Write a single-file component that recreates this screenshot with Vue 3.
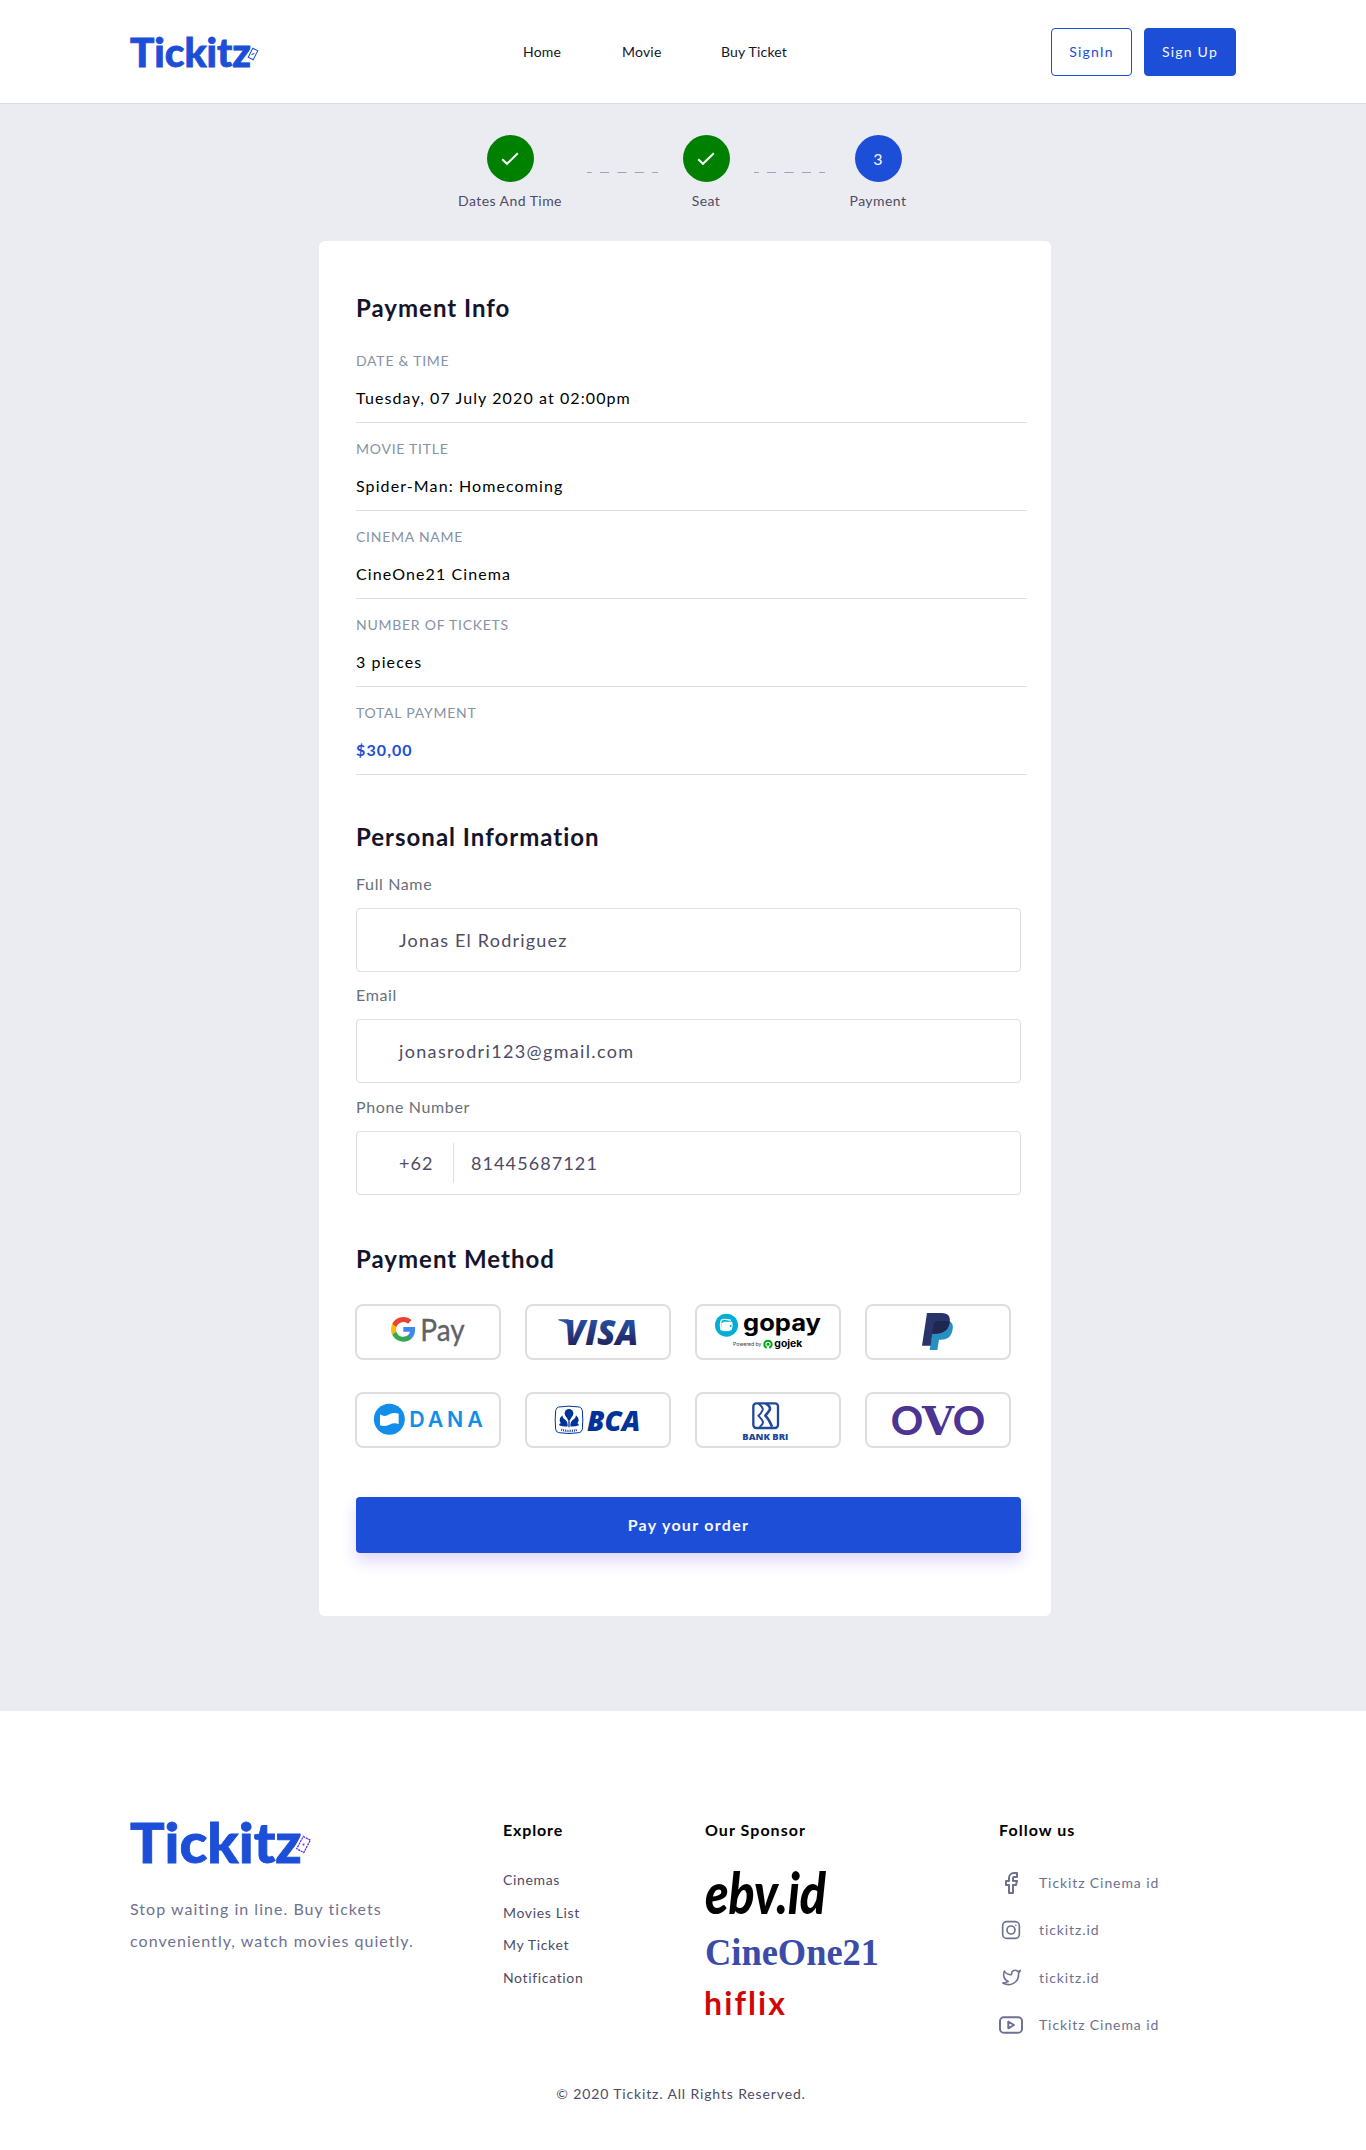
<script setup>
const nav = [
  { text: 'Home', cls: 'n1' },
  { text: 'Movie', cls: 'n2' },
  { text: 'Buy Ticket', cls: 'n3' },
]

const info = [
  { label: 'DATE & TIME', value: 'Tuesday, 07 July 2020 at 02:00pm' },
  { label: 'MOVIE TITLE', value: 'Spider-Man: Homecoming' },
  { label: 'CINEMA NAME', value: 'CineOne21 Cinema' },
  { label: 'NUMBER OF TICKETS', value: '3 pieces' },
  { label: 'TOTAL PAYMENT', value: '$30,00', total: true },
]

const explore = ['Cinemas', 'Movies List', 'My Ticket', 'Notification']
</script>

<template>
  <div class="page">
    <header class="header">
      <svg class="logo" width="130" height="34" viewBox="0 0 130 34">
        <text class="brand" x="0" y="31.500" font-size="39.500" textLength="121" lengthAdjust="spacingAndGlyphs">Tickitz</text>
        <g transform="translate(123 19) rotate(27)">
          <rect x="-4.5" y="-7.5" width="9" height="15" fill="#fff" />
          <rect x="-2.8" y="-5" width="5.6" height="10" fill="none" stroke="#1d4ed8" stroke-width="1" />
          <path d="M-1 1L1 -1" stroke="#1d4ed8" />
        </g>
      </svg>
      <nav class="nav">
        <a v-for="n in nav" :key="n.text" :class="n.cls">{{ n.text }}</a>
      </nav>
      <div class="auth">
        <button class="btn outline">SignIn</button>
        <button class="btn solid">Sign Up</button>
      </div>
    </header>

    <main class="main">
      <div class="steps">
        <div class="step s1">
          <span class="dot done">
            <svg width="18" height="14" viewBox="0 0 18 14"><path d="M1.2 7.2L6 11.8L16.8 1.2" fill="none" stroke="#fff" stroke-width="2" /></svg>
          </span>
          <span class="caption">Dates And Time</span>
        </div>
        <svg class="dash" width="71" height="1" viewBox="0 0 71 1"><path d="M0 .5H71" stroke="#a0a3bd" stroke-dasharray="9.2 8.2" stroke-dashoffset="4.4" /></svg>
        <div class="step s2">
          <span class="dot done">
            <svg width="18" height="14" viewBox="0 0 18 14"><path d="M1.2 7.2L6 11.8L16.8 1.2" fill="none" stroke="#fff" stroke-width="2" /></svg>
          </span>
          <span class="caption">Seat</span>
        </div>
        <svg class="dash" width="71" height="1" viewBox="0 0 71 1"><path d="M0 .5H71" stroke="#a0a3bd" stroke-dasharray="9.2 8.2" stroke-dashoffset="4.4" /></svg>
        <div class="step s3">
          <span class="dot current">3</span>
          <span class="caption">Payment</span>
        </div>
      </div>

      <section class="card">
        <h2>Payment Info</h2>
        <div class="rows">
          <div v-for="row in info" :key="row.label" class="row">
            <div class="row-label">{{ row.label }}</div>
            <div class="row-value" :class="{ total: row.total }">{{ row.value }}</div>
          </div>
        </div>

        <h2 class="h-personal">Personal Information</h2>
        <div class="fields">
          <div class="field">
            <label>Full Name</label>
            <div class="input"><span>Jonas El Rodriguez</span></div>
          </div>
          <div class="field">
            <label>Email</label>
            <div class="input"><span class="mail">jonasrodri123@gmail.com</span></div>
          </div>
          <div class="field">
            <label>Phone Number</label>
            <div class="input"><span class="prefix">+62</span><span class="phone">81445687121</span></div>
          </div>
        </div>

        <h2 class="h-method">Payment Method</h2>
        <div class="methods">
          <div class="tile">
            <svg viewBox="45 42 438 168">
              <g transform="translate(149.6 77.6) scale(3.36)">
                <path fill="#4285f4" d="M22.56 12.25c0-.78-.07-1.53-.2-2.25H12v4.26h5.92c-.26 1.37-1.04 2.53-2.21 3.31v2.77h3.57c2.08-1.92 3.28-4.74 3.28-8.09z" />
                <path fill="#34a853" d="M12 23c2.97 0 5.46-.98 7.28-2.66l-3.57-2.77c-.98.66-2.23 1.06-3.71 1.06-2.86 0-5.29-1.93-6.16-4.53H2.18v2.84C3.99 20.53 7.7 23 12 23z" />
                <path fill="#fbbc05" d="M5.84 14.09c-.22-.66-.35-1.36-.35-2.09s.13-1.43.35-2.09V7.07H2.18C1.43 8.55 1 10.22 1 12s.43 3.45 1.18 4.93l2.85-2.22.81-.62z" />
                <path fill="#ea4335" d="M12 5.38c1.62 0 3.06.56 4.21 1.64l3.15-3.15C17.45 2.09 14.97 1 12 1 7.7 1 3.99 3.47 2.18 7.07l3.66 2.84c.87-2.6 3.3-4.53 6.16-4.53z" />
              </g>
              <text class="lato" x="241" y="153" font-size="90" fill="#5f6368" stroke="#5f6368" stroke-width="1" textLength="133" lengthAdjust="spacingAndGlyphs">Pay</text>
            </svg>
          </div>
          <div class="tile">
            <svg viewBox="555 42 438 168">
              <defs>
                <linearGradient id="visa" x1="0" y1="0" x2="0" y2="1">
                  <stop offset=".25" stop-color="#2850a6" />
                  <stop offset=".8" stop-color="#22245f" />
                </linearGradient>
              </defs>
              <path d="M655 88H684Q690 88 692 96L697 125Q686 98 655 91Z" fill="#2850a6" />
              <text class="open" x="673" y="164" font-size="106" font-weight="800" font-style="italic" fill="url(#visa)" textLength="222" lengthAdjust="spacingAndGlyphs">VISA</text>
            </svg>
          </div>
          <div class="tile">
            <svg viewBox="45 42 438 168">
              <circle cx="139.500" cy="105.500" r="34.500" fill="#00aed6" />
              <path d="M153 91Q125 85 123 93Q119 106 123 119Q137 124 153 119Q158 106 155 97H130" fill="none" stroke="#fff" stroke-width="4" stroke-linejoin="round" />
              <path d="M124 98H154Q157 108 153 119Q138 123 124 119Z" fill="#fff" />
              <circle cx="152" cy="108" r="3" fill="#00aed6" />
              <text class="inter" x="189" y="122" font-size="68" font-weight="700" textLength="234" lengthAdjust="spacingAndGlyphs">gopay</text>
              <text class="inter" x="159" y="167" font-size="16" fill="#333" textLength="85" lengthAdjust="spacingAndGlyphs">Powered by</text>
              <circle cx="264" cy="163" r="11" fill="none" stroke="#00aa13" stroke-width="6" stroke-dasharray="61 8" stroke-dashoffset="48" />
              <circle cx="264" cy="163" r="4.500" fill="#00aa13" />
              <text class="inter" x="283" y="170" font-size="28" font-weight="700" textLength="84" lengthAdjust="spacingAndGlyphs">gojek</text>
            </svg>
          </div>
          <div class="tile">
            <svg viewBox="555 42 438 168">
              <path d="M763 93H806C818 97 821 108 817 122C813 141 800 149 784 149H777L772 180H749L752 160Z" fill="#2790c3" />
              <path d="M741 69H785C805 69 812 80 809 97C805 122 788 131 766 131H757L752 167H726Z" fill="#28346a" />
              <path d="M771 93H809C808 118 793 131 766 131H757L761 101Q763 93 771 93Z" fill="#1f264f" />
            </svg>
          </div>
          <div class="tile">
            <svg viewBox="45 306 438 168">
              <circle cx="148" cy="388" r="46.500" fill="#118eea" />
              <path d="M120 373Q134 383 148 373Q162 366 176 371V402Q162 397 148 404Q134 411 120 406Z" fill="#fff" />
              <text class="inter" x="208" y="412" font-size="64" font-weight="600" fill="#118eea" textLength="220">DANA</text>
            </svg>
          </div>
          <div class="tile">
            <svg viewBox="555 306 438 168">
              <g fill="#003399">
                <path d="M656 351Q687 346 718 351Q726 353 727 362Q730 390 727 418Q725 426 718 428Q687 433 656 428Q648 426 647 418Q644 390 647 362Q648 353 656 351Z" fill="none" stroke="#003399" stroke-width="3" />
                <circle cx="687" cy="370" r="13" />
                <path d="M676 376H698L690 390H684Z" />
                <path d="M683 409Q662 405 659 393Q659 382 667 376Q669 387 676 389Q684 396 683 409Z" />
                <path d="M691 409Q712 405 716 393Q716 382 708 376Q706 387 699 389Q690 396 691 409Z" />
                <path d="M683 409Q672 411 657 406Q658 399 665 399Z M691 409Q702 411 717 406Q716 399 709 399Z" />
                <path d="M685 384H689V412H685Z" />
                <path d="M664 419Q687 427 711 419" fill="none" stroke="#003399" stroke-width="7" stroke-dasharray="2.500 3" />
                <text class="open" x="741" y="422" font-size="85" font-weight="800" font-style="italic" textLength="160" lengthAdjust="spacingAndGlyphs">BCA</text>
              </g>
            </svg>
          </div>
          <div class="tile">
            <svg viewBox="45 306 438 168">
              <g fill="none" stroke="#20489a" stroke-width="7" stroke-linejoin="round">
                <rect x="220" y="340" width="74" height="74" rx="9" />
                <path d="M236 341Q250 352 248 360Q244 370 235 377Q246 388 249 396Q250 402 239 411" stroke-width="6" />
                <path d="M257 341Q271 348 270 358Q264 368 256 377Q267 388 276 410" stroke-width="8" />
              </g>
              <text class="open" x="187" y="450" font-size="27" font-weight="800" fill="#20489a" textLength="138" lengthAdjust="spacingAndGlyphs">BANK BRI</text>
            </svg>
          </div>
          <div class="tile">
            <svg viewBox="555 306 438 168">
              <g fill="#4c3494">
                <text class="inter" x="630" y="434" font-size="120" font-weight="600" textLength="102" lengthAdjust="spacingAndGlyphs">O</text>
                <text class="dserif" x="726" y="434" font-size="119" font-weight="700" textLength="96" lengthAdjust="spacingAndGlyphs">V</text>
                <text class="inter" x="816" y="434" font-size="120" font-weight="600" textLength="102" lengthAdjust="spacingAndGlyphs">O</text>
              </g>
            </svg>
          </div>
        </div>

        <button class="pay">Pay your order</button>
      </section>
    </main>

    <footer class="footer">
      <div class="cols">
        <div class="about">
          <svg class="logo" width="184" height="48" viewBox="0 0 184 48">
            <text class="brand" x="0" y="44.500" font-size="55.500" textLength="172" lengthAdjust="spacingAndGlyphs">Tickitz</text>
            <g transform="translate(173.500 26.500) rotate(28)">
              <rect x="-6.500" y="-9.500" width="13" height="19" fill="#fff" />
              <rect x="-4" y="-7" width="8" height="14" fill="none" stroke="#5f2eea" stroke-width="1.300" stroke-dasharray="2.200 .7" />
              <circle r="1" fill="#5f2eea" />
            </g>
          </svg>
          <p>Stop waiting in line. Buy tickets<br />conveniently, watch movies quietly.</p>
        </div>
        <div class="explore">
          <h3 class="tight">Explore</h3>
          <a v-for="item in explore" :key="item">{{ item }}</a>
        </div>
        <div class="sponsor">
          <h3>Our Sponsor</h3>
          <svg width="180" height="156" viewBox="0 0 180 156">
            <text class="lato" x="0" y="46" font-size="58" font-weight="900" font-style="italic" textLength="121" lengthAdjust="spacingAndGlyphs">ebv.id</text>
            <text class="lserif" x="0" y="96.500" font-size="37" font-weight="700" fill="#3a4ca8" textLength="174" lengthAdjust="spacingAndGlyphs">CineOne21</text>
            <text class="lato plain" x="-1" y="147" font-size="32" font-weight="700" fill="#d00707" textLength="81">hiflix</text>
          </svg>
        </div>
        <div class="follow">
          <h3>Follow us</h3>
          <ul>
            <li>
              <span class="ico"><svg width="24" height="24" viewBox="0 0 24 24"><path d="M18 2h-3a5 5 0 0 0-5 5v3H7v4h3v8h4v-8h3l1-4h-4V7a1 1 0 0 1 1-1h3z" /></svg></span>
              <span>Tickitz Cinema id</span>
            </li>
            <li>
              <span class="ico"><svg width="20" height="20" viewBox="0 0 24 24"><rect x="2" y="2" width="20" height="20" rx="5" /><circle cx="12" cy="12" r="4.800" /><path d="M17.800 6.300h.01" /></svg></span>
              <span>tickitz.id</span>
            </li>
            <li>
              <span class="ico"><svg width="19" height="19" viewBox="0 0 24 24"><path d="M23 3a10.900 10.900 0 0 1-3.140 1.530 4.480 4.480 0 0 0-7.860 3v1A10.660 10.660 0 0 1 3 4s-4 9 5 13a11.640 11.640 0 0 1-7 2c9 5 20 0 20-11.500a4.500 4.500 0 0 0-.08-.83A7.720 7.720 0 0 0 23 3z" /></svg></span>
              <span>tickitz.id</span>
            </li>
            <li>
              <span class="ico"><svg width="24" height="18" viewBox="0 0 24 18"><rect x="1" y="1.300" width="22" height="15.400" rx="3.800" /><path d="M9.300 5.700V12.300L15 9Z" /></svg></span>
              <span>Tickitz Cinema id</span>
            </li>
          </ul>
        </div>
      </div>
      <p class="copy">© 2020 Tickitz. All Rights Reserved.</p>
    </footer>
  </div>
</template>

<style>
body {
  margin: 0;
  background: #fff;
}
</style>

<style scoped>
.page {
  width: 1366px;
  height: 2150px;
  overflow: hidden;
  background: #fff;
  font-family: Lato, "Open Sans", sans-serif;
  color: #14142b;
}
h2, h3, p, ul {
  margin: 0;
  padding: 0;
}
button {
  font-family: inherit;
  box-sizing: border-box;
  padding: 0;
}
.logo {
  display: block;
  overflow: visible;
}
.brand {
  font-family: Lato, sans-serif;
  font-weight: 900;
  fill: #1d4ed8;
  stroke: #1d4ed8;
  stroke-width: .8;
}
.lato { font-family: Lato, sans-serif; }
.open { font-family: "Open Sans", sans-serif; }
.inter { font-family: Inter, sans-serif; }
.dserif { font-family: "DejaVu Serif", serif; }
.lserif { font-family: "Liberation Serif", serif; }
.plain { font-variant-ligatures: none; }

.header {
  box-sizing: border-box;
  height: 104px;
  padding: 0 130px;
  display: flex;
  align-items: center;
  border-bottom: 1px solid #dedede;
}
.nav {
  display: flex;
  margin-left: 263px;
  font-size: 14px;
  line-height: 20px;
  letter-spacing: .2px;
}
.nav a { white-space: nowrap; }
.n1 { width: 99px; }
.n2 { width: 99px; }
.auth {
  display: flex;
  gap: 12px;
  margin-left: auto;
}
.btn {
  height: 48px;
  border-radius: 4px;
  border: 1px solid #1d4ed8;
  font-size: 14px;
  letter-spacing: 1.2px;
}
.outline {
  width: 81px;
  background: #fff;
  color: #1d4ed8;
}
.solid {
  width: 92px;
  background: #1d4ed8;
  color: #f7f7fc;
}

.main {
  box-sizing: border-box;
  height: 1607px;
  padding-top: 31px;
  background: #ebecf1;
}
.steps {
  display: flex;
  margin-left: 457px;
  height: 106px;
}
.step {
  display: flex;
  flex-direction: column;
  align-items: center;
}
.s1 { width: 106px; margin-right: 24px; }
.s2 { width: 50px; margin: 0 23px; }
.s3 { width: 60px; margin-left: 23px; }
.dot {
  display: flex;
  align-items: center;
  justify-content: center;
  width: 47px;
  height: 47px;
  border-radius: 50%;
  font-size: 16px;
  color: #f7f7fc;
}
.done { background: #008000; }
.current { background: #1d4ed8; }
.caption {
  margin-top: 9px;
  font-size: 14px;
  line-height: 20px;
  color: #4e4b66;
  letter-spacing: .45px;
  white-space: nowrap;
}
.dash { margin-top: 37px; }

.card {
  box-sizing: border-box;
  width: 732px;
  height: 1375px;
  margin-left: 319px;
  padding: 52px 30px 0 37px;
  border-radius: 6px;
  background: #fff;
}
h2 {
  font-size: 24px;
  line-height: 30px;
  font-weight: 700;
  letter-spacing: 1px;
}
.rows { margin-top: 12px; width: 671px; }
.row {
  box-sizing: border-box;
  height: 88px;
  padding-top: 16px;
  border-bottom: 1px solid #dedede;
}
.row-label {
  font-size: 14px;
  line-height: 20px;
  letter-spacing: .75px;
  color: #8692a6;
}
.row-value {
  margin-top: 15px;
  font-size: 16px;
  line-height: 24px;
  letter-spacing: 1.1px;
  color: #000;
}
.total {
  font-weight: 700;
  color: #1d4ed8;
}
.h-personal { margin-top: 47px; }
.fields {
  display: flex;
  flex-direction: column;
  gap: 11.4px;
  width: 665px;
  margin-top: 20px;
}
.field label {
  display: block;
  font-size: 16px;
  line-height: 24px;
  letter-spacing: .63px;
  color: #696f79;
}
.input {
  box-sizing: border-box;
  display: flex;
  align-items: center;
  height: 64px;
  margin-top: 12px;
  padding-left: 42px;
  border: 1px solid #dedede;
  border-radius: 4px;
  font-size: 18px;
  letter-spacing: 1.2px;
  color: #4e4b66;
}
.mail { letter-spacing: 1.35px; }
.prefix {
  box-sizing: border-box;
  width: 55px;
  height: 40px;
  line-height: 40px;
  letter-spacing: 1px;
  border-right: 1px solid #dedede;
}
.phone {
  margin-left: 17px;
  letter-spacing: 1.1px;
}
.h-method { margin-top: 49px; }
.methods {
  display: grid;
  grid-template-columns: repeat(4, 146px);
  gap: 32px 24px;
  margin: 30px 0 0 -1px;
}
.tile {
  box-sizing: border-box;
  height: 56px;
  border: 2px solid #dedede;
  border-radius: 8px;
}
.tile svg {
  display: block;
  width: 146px;
  height: 56px;
  margin: -2px;
}
.pay {
  display: block;
  width: 665px;
  height: 56px;
  margin-top: 49px;
  border: 0;
  border-radius: 4px;
  background: #1d4ed8;
  color: #f7f7fc;
  font-size: 16px;
  font-weight: 700;
  letter-spacing: 1.3px;
  box-shadow: 0 8px 16px rgba(95, 46, 234, .2);
}

.footer { padding: 107px 130px 0; }
.cols { display: flex; height: 266px; }
.about { width: 373px; }
.about p {
  margin-top: 27px;
  font-size: 16px;
  line-height: 32px;
  letter-spacing: 1.03px;
  color: #6e7191;
}
h3 {
  font-size: 16px;
  line-height: 24px;
  font-weight: 700;
  letter-spacing: 1.05px;
  color: #000;
}
.tight { letter-spacing: .85px; }
.explore { width: 202px; }
.explore h3 { margin-bottom: 22px; }
.explore a {
  display: block;
  font-size: 14px;
  line-height: 32.700px;
  letter-spacing: .65px;
  color: #4e4b66;
}
.sponsor { width: 294px; }
.sponsor svg {
  display: block;
  overflow: visible;
  margin-top: 26px;
}
.follow ul {
  margin-top: 17px;
  list-style: none;
}
.follow li {
  display: flex;
  align-items: center;
  height: 47.300px;
  font-size: 14px;
  letter-spacing: .9px;
  color: #6e7191;
}
.ico {
  display: flex;
  justify-content: center;
  width: 24px;
  margin-right: 16px;
}
.ico svg {
  fill: none;
  stroke: #6e7191;
  stroke-width: 2;
  stroke-linecap: round;
  stroke-linejoin: round;
}
.copy {
  text-align: center;
  margin-left: -4px;
  font-size: 14px;
  line-height: 20px;
  letter-spacing: .86px;
  color: #4e4b66;
}
</style>
